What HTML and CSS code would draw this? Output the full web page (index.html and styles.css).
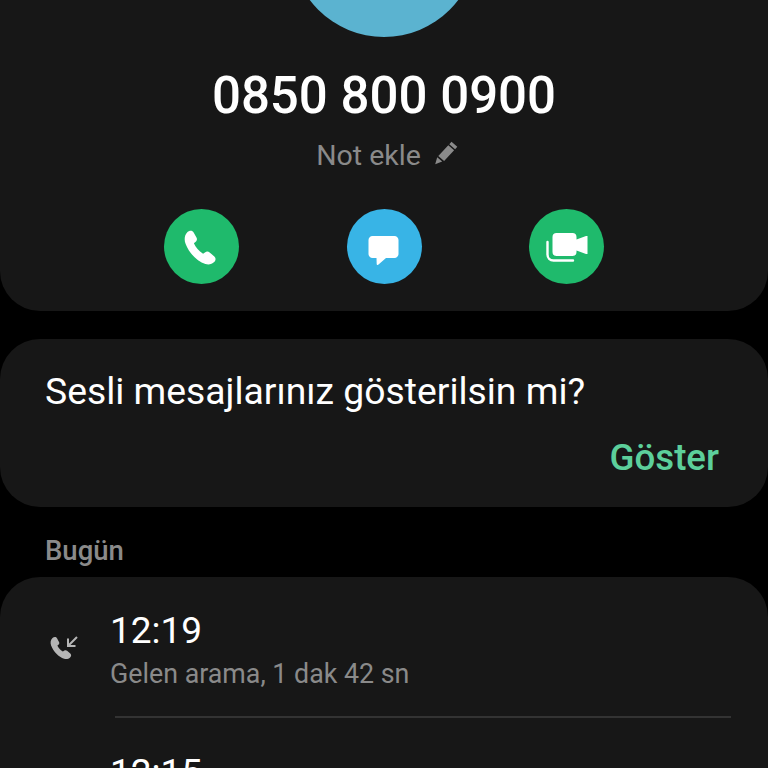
FILE: index.html
```html
<!DOCTYPE html>
<html lang="en">
<head>
  <meta charset="UTF-8">
  <title>Arama ayrıntıları</title>
  <link rel="stylesheet" href="styles.css">
</head>
<body>
  <div class="card headerCard">
    <div class="avatar"></div>
    <div class="number">0850 800 0900</div>
    <div class="note">
      <span>Not ekle</span>
      <svg class="noteIcon" width="24" height="24" viewBox="0 0 24 24"><path fill="#8a8a8a" d="M17.500.8l5.800 5-2.200 2.500-5.800-5zM14.300 4.300l5.800 5-10 10.700-5.800-5zM3.200 16.200l5 4.400-7 2.600z"/></svg>
    </div>
    <div class="actions">
      <div class="action green">
        <svg width="40" height="40" viewBox="1 1 34 34"><path fill="#fff" d="M5.500 5.500c1.800-1.800 4.400-1.700 5.400.1l2.400 4.400c.8 1.400.3 2.800-.9 3.800l-1.300 1.100c1.500 3.500 4.200 6.700 7.800 8.800l1.600-1.100c1.400-1 2.900-.9 4 .1l4 3.300c1.500 1.200 1.300 3.300-.2 4.800-1.800 1.800-4.600 2.500-7.400 1.600-6.900-2.100-13.600-8.700-16.800-16.900-1.500-3.900-.9-7.600 1.400-10z"/></svg>
      </div>
      <div class="action blue">
        <svg width="40" height="40" viewBox="0 0 40 40"><path fill="#fff" d="M8.500 9h22c2.200 0 4 1.800 4 4v14c0 2.200-1.800 4-4 4h-8.500l-7.500 6.600c-.8.700-1.800.3-1.800-.7l-.2-5.900h-4c-2.200 0-4-1.800-4-4V13c0-2.200 1.800-4 4-4z"/></svg>
      </div>
      <div class="action green">
        <svg width="44" height="44" viewBox="0 0 44 44"><path fill="#fff" d="M11.500 8h16c2.500 0 4 1.500 4 4v2.500l9.500-3.500h1.500v18H41l-9.500-3.500V27c0 2.500-1.500 4-4 4h-16c-2.500 0-4-1.500-4-4V12c0-2.500 1.500-4 4-4z"/><path fill="none" stroke="#fff" stroke-width="2.400" stroke-linecap="round" d="M2.500 17v12.500c0 3.500 2.500 6 6 6h19.500"/></svg>
      </div>
    </div>
  </div>

  <div class="card voiceCard">
    <div class="voiceText">Sesli mesajlarınız gösterilsin mi?</div>
    <div class="voiceLink">Göster</div>
  </div>

  <div class="dayLabel">Bugün</div>

  <div class="card logCard">
    <div class="logRow">
      <svg class="logIcon" width="28" height="28" viewBox="0 0 28 28"><path fill="#b5b5b5" d="M2.500 3c1.500-1.500 3.700-1.400 4.500.2l2 3.700c.6 1.100.3 2.100-.6 2.800l-1 .8c1 2.400 2.800 4.500 5.400 6l1.300-.8c1-.7 2.200-.6 3 .1l3.200 2.600c1.200 1 1.100 2.800-.2 4-1.500 1.500-3.700 2-6 1.300-5.400-1.700-10.600-6.800-13-13.200-1.100-3-.4-5.700 1.400-7.500z"/><path fill="none" stroke="#b5b5b5" stroke-width="2" d="M27 2l-8.500 8.500M18 3.500v7.500h7.500"/></svg>
      <div class="logInfo">
        <div class="logTime">12:19</div>
        <div class="logDetail">Gelen arama, 1 dak 42 sn</div>
      </div>
    </div>
    <div class="logDivider"></div>
    <div class="logRow">
      <div class="logIconSpace"></div>
      <div class="logInfo">
        <div class="logTime">12:15</div>
      </div>
    </div>
  </div>
</body>
</html>
```

FILE: styles.css
```css
html, body {
  height: 100%;
}

body {
  margin: 0;
  background: #000;
  color: #fff;
  font-family: Roboto, 'Noto Sans', sans-serif;
  overflow: hidden;
}

.card {
  background: #171717;
  border-radius: 40px;
}

.headerCard {
  height: 311px;
  border-radius: 0 0 40px 40px;
  display: flex;
  flex-direction: column;
  align-items: center;
  overflow: hidden;
}

.avatar {
  width: 186px;
  height: 186px;
  flex-shrink: 0;
  margin-top: -149px;
  border-radius: 50%;
  background: #5bb3d0;
}

.number {
  margin-top: 27px;
  font-size: 51px;
  line-height: 64px;
  font-weight: 500;
}

.note {
  margin-top: 10px;
  margin-left: 6px;
  display: flex;
  align-items: center;
  gap: 13px;
  font-size: 28.5px;
  line-height: 36px;
  color: #8a8a8a;
}

.noteIcon {
  margin-top: -6px;
}

.actions {
  margin-top: 35px;
  display: flex;
  gap: 107.5px;
}

.action {
  width: 75px;
  height: 75px;
  border-radius: 50%;
  display: flex;
  align-items: center;
  justify-content: center;
}

.green {
  background: #1fba6c;
}

.blue {
  background: #38b4e6;
}

.voiceCard {
  margin-top: 28px;
  height: 168px;
  padding: 0 49px 0 45px;
  box-sizing: border-box;
}

.voiceText {
  padding-top: 29px;
  font-size: 37.3px;
  line-height: 46px;
}

.voiceLink {
  margin-top: 21px;
  text-align: right;
  font-size: 36.7px;
  line-height: 46px;
  font-weight: 500;
  color: #5ccf9b;
}

.dayLabel {
  margin-top: 28px;
  padding-left: 45px;
  font-size: 27.5px;
  line-height: 32px;
  font-weight: 500;
  color: #8a8a8a;
}

.logCard {
  margin-top: 10px;
  height: 260px;
  padding: 31px 37px 0 50px;
  border-radius: 40px 40px 0 0;
}

.logRow {
  display: flex;
  align-items: center;
}

.logIcon, .logIconSpace {
  width: 28px;
  flex-shrink: 0;
  margin-right: 32px;
}

.logTime {
  font-size: 37px;
  line-height: 46px;
}

.logDetail {
  margin-top: 4px;
  font-size: 26.8px;
  line-height: 32px;
  color: #8a8a8a;
}

.logDivider {
  margin: 26px 0 32px 65px;
  height: 2px;
  background: #333;
}
```
